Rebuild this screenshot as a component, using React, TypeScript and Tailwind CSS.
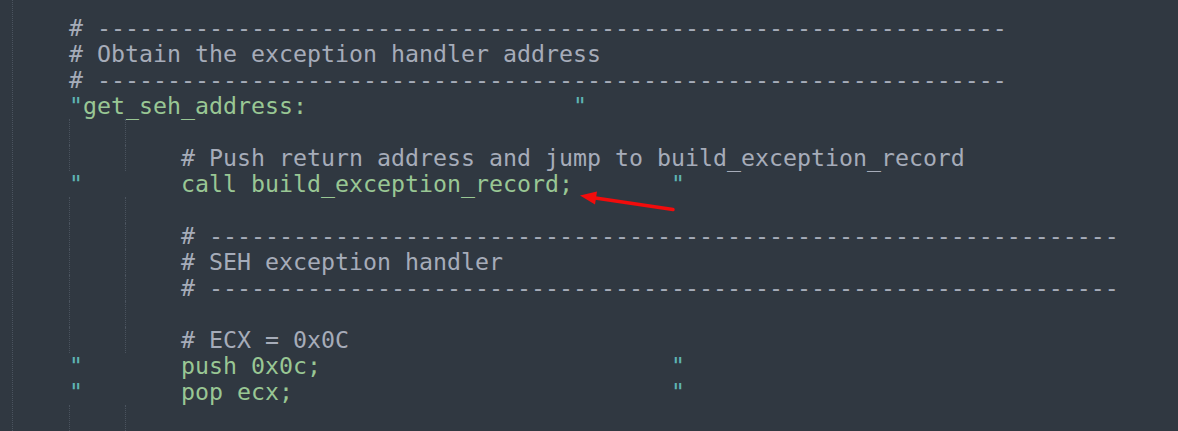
import React from "react"

type Tok = { t: string; c: "cm" | "str" | "q" | "sp" }

type Line = { guides: boolean; toks: Tok[] }

const sp = (n: number): Tok => ({ t: " ".repeat(n), c: "sp" })
const cm = (t: string): Tok => ({ t, c: "cm" })
const str = (t: string): Tok => ({ t, c: "str" })
const q: Tok = { t: '"', c: "q" }
const dashes = "# " + "-".repeat(65)

const colors: Record<Tok["c"], string> = {
  cm: "text-[#a6acb9]",
  str: "text-[#99c794]",
  q: "text-[#5fb4b4]",
  sp: "",
}

const lines: Line[] = [
  { guides: false, toks: [] },
  { guides: false, toks: [sp(4), cm(dashes)] },
  { guides: false, toks: [sp(4), cm("# Obtain the exception handler address")] },
  { guides: false, toks: [sp(4), cm(dashes)] },
  { guides: false, toks: [sp(4), q, str("get_seh_address:"), sp(19), q] },
  { guides: true, toks: [] },
  { guides: true, toks: [cm("# Push return address and jump to build_exception_record")] },
  { guides: false, toks: [sp(4), q, sp(7), str("call build_exception_record;"), sp(7), q] },
  { guides: true, toks: [] },
  { guides: true, toks: [cm(dashes)] },
  { guides: true, toks: [cm("# SEH exception handler")] },
  { guides: true, toks: [cm(dashes)] },
  { guides: true, toks: [] },
  { guides: true, toks: [cm("# ECX = 0x0C")] },
  { guides: false, toks: [sp(4), q, sp(7), str("push 0x0c;"), sp(25), q] },
  { guides: false, toks: [sp(4), q, sp(7), str("pop ecx;"), sp(27), q] },
  { guides: true, toks: [] },
]

const CodeLine = ({ line }: { line: Line }) => (
  <div className="h-[26px] leading-[26px] whitespace-pre flex">
    {line.guides && (
      <>
        <span className="inline-block w-[56px] h-full shrink-0" />
        <span className="inline-block w-[56px] h-full shrink-0 border-l border-dotted border-[#4a535e]" />
        <span className="inline-block w-[56px] h-full shrink-0 border-l border-dotted border-[#4a535e]" />
      </>
    )}
    {line.toks.map((tok, i) => (
      <span key={i} className={colors[tok.c]}>{tok.t}</span>
    ))}
  </div>
)

export default function App() {
  return (
    <div className="relative w-full h-[431px] overflow-hidden bg-[#303841] pl-[12px]">
      {/* code column, col 0 guide on the left edge */}
      <div
        className="-mt-[11px] border-l border-dotted border-[#4a535e] text-[23.25px] antialiased"
        style={{ fontFamily: '"DejaVu Sans Mono", "Liberation Mono", monospace' }}
      >
        {lines.map((l, i) => <CodeLine key={i} line={l} />)}
      </div>

      {/* annotation arrow */}
      <svg className="absolute inset-0 pointer-events-none" width="1178" height="431" viewBox="0 0 1178 431">
        <line x1="673" y1="209.5" x2="592" y2="197.5" stroke="#f20c0c" strokeWidth="3.5" strokeLinecap="round" />
        <polygon points="580,195.5 597,191.5 595,204.5" fill="#f20c0c" />
      </svg>
    </div>
  )
}
